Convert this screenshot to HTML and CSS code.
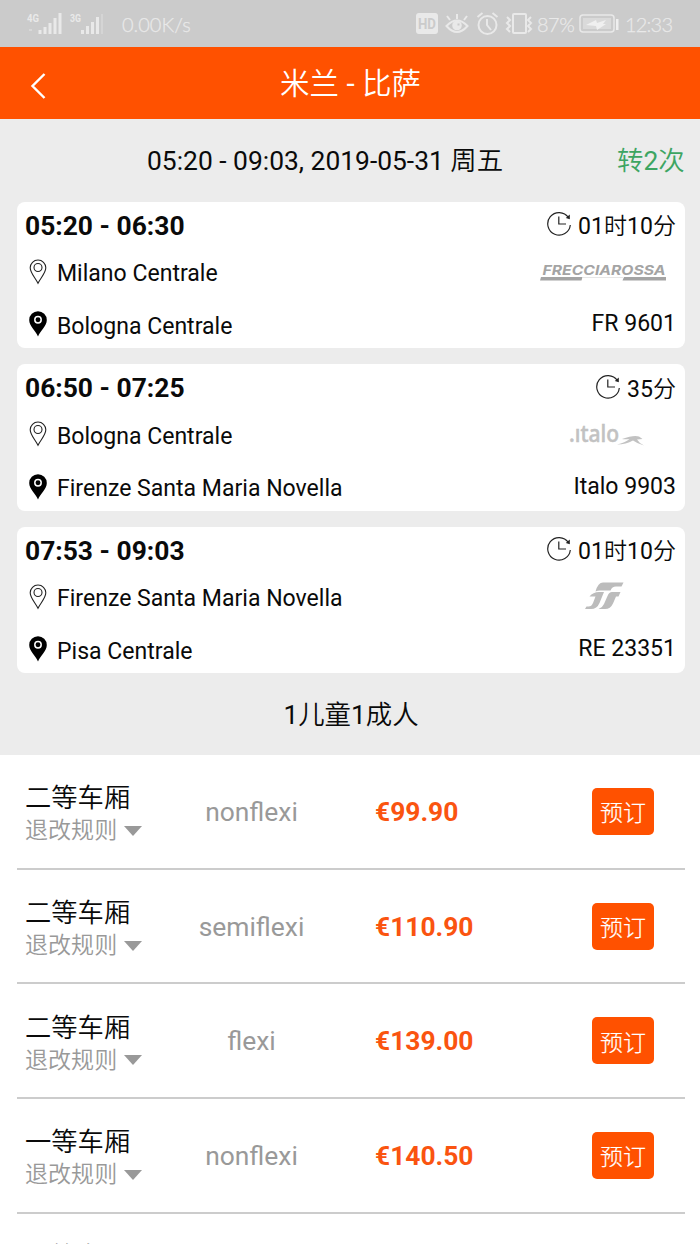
FILE: index.html
```html
<!DOCTYPE html>
<html lang="zh-CN">
<head>
<meta charset="utf-8">
<title>米兰 - 比萨</title>
<link rel="stylesheet" href="styles.css">
</head>
<body>
<svg class="defs" aria-hidden="true">
  <symbol id="pin-open" viewBox="0 0 18 26"><path d="M9 24.3C6.5 19 1.2 14 1.2 8.8a7.8 7.8 0 0 1 15.6 0C16.800 14 11.500 19 9 24.300Z" fill="none" stroke="#222" stroke-width="1.100"/><circle cx="9" cy="8.500" r="4" fill="none" stroke="#222" stroke-width="1.100"/></symbol>
  <symbol id="pin-full" viewBox="0 0 18 26"><path d="M9 25.500C6.500 19.500 .2 15 .2 9a8.800 8.800 0 0 1 17.600 0C17.800 15 11.500 19.500 9 25.500Z"/><circle cx="9" cy="8.700" r="3.200" fill="none" stroke="#fff" stroke-width="1.500"/></symbol>
  <symbol id="clock" viewBox="0 0 26 26"><path d="M22.400 6.500A11.300 11.300 0 1 0 24.300 14M12.800 5.500V13H20" fill="none" stroke="#222" stroke-width="1.200"/><path d="M23.800 3.500V8.200L19.800 7Z" fill="#222"/></symbol>
</svg>

<div class="status">
  <svg class="signal" width="80" height="24" viewBox="0 0 80 24" fill="#e9e9e9">
    <text class="net" x="0" y="10" textLength="12" lengthAdjust="spacingAndGlyphs">4G</text><text class="net" x="43" y="10" textLength="11" lengthAdjust="spacingAndGlyphs">3G</text>
    <path d="M2 17h3v2H2z" opacity=".45"/>
    <path d="M11.500 18h3v4h-3zM16.500 15h3v7h-3zM21.500 11h3v11h-3zM26.500 6h3v16h-3zM31.500 1h3v21h-3zM54 18h3v4h-3zM59 14h3v8h-3zM64 10h3v12h-3zM69 5h3v17h-3z"/>
    <path d="M74 2h2v20h-2z" opacity=".35"/>
  </svg>
  <span class="speed">0.00K/s</span>
  <svg class="indicators" width="121" height="24" viewBox="0 0 121 24" fill="none" stroke="#e9e9e9" stroke-width="2">
    <rect x="0" y="1" width="22" height="21" rx="3" fill="#e9e9e9" stroke="none"/>
    <text class="hd" x="2" y="17" textLength="18" lengthAdjust="spacingAndGlyphs">HD</text>
    <path d="M30.500 14Q41 3 51.500 14Q41 26 30.500 14ZM31 4l3 4M41 2v5M51 4l-3 4"/><circle cx="41" cy="13.500" r="3.800" fill="#e9e9e9"/><path d="M41.500 12.500h2" stroke="#cbcbcb"/>
    <circle cx="71.500" cy="13" r="9"/><path d="M71 7v6l4 5M61.500 5l5-4M76.500 1l5 4"/>
    <rect x="97" y="2" width="13" height="19" rx="1"/>
    <path d="M91 5l3 3-3 3 3 3-3 3 3 3M115 5l-3 3 3 3-3 3 3 3-3 3"/>
  </svg>
  <span class="percent">87%</span>
  <svg class="battery" width="40" height="20" viewBox="0 0 40 20"><rect x="1" y="1" width="34" height="17" rx="3" fill="none" stroke="#e9e9e9" stroke-width="1.500"/><rect x="4" y="4" width="28" height="11" fill="#dadada"/><path d="M7 11L17 6l1 3 9-3-3 4h3l-9 6-1-4Z" fill="#f0f0f0"/><path d="M37 5h2.500v11H37z" fill="#efefef"/></svg>
  <span class="time">12:33</span>
</div>

<header class="nav">
  <svg class="back" width="16" height="28" viewBox="0 0 16 28"><path d="M14.500 2L2.500 14l12 12" fill="none" stroke="#fff" stroke-width="2.400"/></svg>
  <h1 class="title">米兰 - 比萨</h1>
</header>

<main>
<section class="trip">
  <div class="summary"><span class="when">05:20 - 09:03, 2019-05-31 周五</span><span class="changes">转2次</span></div>

  <article class="leg">
    <div class="stops">
      <div class="hours">05:20 - 06:30</div>
      <div class="stop from"><svg class="pin"><use href="#pin-open"/></svg>Milano Centrale</div>
      <div class="stop to"><svg class="pin"><use href="#pin-full"/></svg>Bologna Centrale</div>
    </div>
    <div class="service">
      <div class="duration"><svg class="clock"><use href="#clock"/></svg>01时10分</div>
      <div class="brand"><svg class="freccia" width="128" height="20" viewBox="0 0 128 20" fill="#a4a4a4"><text class="freccia-name" x="2.500" y="11.500" textLength="123" lengthAdjust="spacingAndGlyphs">FRECCIAROSSA</text><path d="M1 14h41.500l-1 3.500H0zM84 14h42v3.500H82.500z"/><path d="M43 14.300h40v.6H43z" opacity=".35"/></svg></div>
      <div class="train">FR 9601</div>
    </div>
  </article>

  <article class="leg">
    <div class="stops">
      <div class="hours">06:50 - 07:25</div>
      <div class="stop from"><svg class="pin"><use href="#pin-open"/></svg>Bologna Centrale</div>
      <div class="stop to"><svg class="pin"><use href="#pin-full"/></svg>Firenze Santa Maria Novella</div>
    </div>
    <div class="service">
      <div class="duration"><svg class="clock"><use href="#clock"/></svg>35分</div>
      <div class="brand"><svg class="italo" width="76" height="24" viewBox="0 0 76 24" fill="#c2c2c2"><text class="italo-name" x="0" y="18" textLength="50" lengthAdjust="spacingAndGlyphs">.ıtalo</text><path d="M48 20.500Q56 18.500 60.500 15Q56 15.500 53 15Q65 10.500 70 12.500L73.500 15L68 15.500Q70 19 75 21.500Q68 19.500 64 16.500Q57 20.500 48 20.500Z"/></svg></div>
      <div class="train">Italo 9903</div>
    </div>
  </article>

  <article class="leg">
    <div class="stops">
      <div class="hours">07:53 - 09:03</div>
      <div class="stop from"><svg class="pin"><use href="#pin-open"/></svg>Firenze Santa Maria Novella</div>
      <div class="stop to"><svg class="pin"><use href="#pin-full"/></svg>Pisa Centrale</div>
    </div>
    <div class="service">
      <div class="duration"><svg class="clock"><use href="#clock"/></svg>01时10分</div>
      <div class="brand"><svg class="fs" width="39" height="28" viewBox="0 0 39 28" fill="#bcbcbc"><path d="M10.500 9.500Q13 .5 18 .5H38.500L36.500 4.500H31Q27 4.500 25.500 8.500H15Q12.500 8.500 10.500 9.500ZM4.500 14.500Q8 10 14 10H19L14.500 21Q12 27 6 27H0L1.500 24.500H3.500Q6.500 24.500 8 21L10.500 14.500ZM22.500 14Q24 10 27 10H35.500L33.500 14.500H31L28 21.500Q25.500 27 20 27H13.500Q17.500 25.500 19 22Z"/></svg></div>
      <div class="train">RE 23351</div>
    </div>
  </article>

  <div class="passengers">1儿童1成人</div>
</section>

<section class="fares">
  <div class="fare"><div class="cabin"><div class="class">二等车厢</div><div class="rules">退改规则<i class="caret"></i></div></div><div class="flex">nonflexi</div><div class="price">€99.90</div><button class="book">预订</button></div>
  <div class="fare"><div class="cabin"><div class="class">二等车厢</div><div class="rules">退改规则<i class="caret"></i></div></div><div class="flex">semiflexi</div><div class="price">€110.90</div><button class="book">预订</button></div>
  <div class="fare"><div class="cabin"><div class="class">二等车厢</div><div class="rules">退改规则<i class="caret"></i></div></div><div class="flex">flexi</div><div class="price">€139.00</div><button class="book">预订</button></div>
  <div class="fare"><div class="cabin"><div class="class">一等车厢</div><div class="rules">退改规则<i class="caret"></i></div></div><div class="flex">nonflexi</div><div class="price">€140.50</div><button class="book">预订</button></div>
  <div class="fare next"><div class="cabin"><div class="class">一等车厢</div></div></div>
</section>
</main>
</body>
</html>
```
FILE: styles.css
```css
* { box-sizing: border-box; }
html { overflow: hidden; }
body {
  margin: 0;
  width: 700px;
  height: 1244px;
  overflow: hidden;
  background: #fff;
  color: #0a0a0a;
  font-family: Roboto, "Noto Sans CJK SC DemiLight", "Noto Sans CJK SC", sans-serif;
  font-size: 23.050px;
}
svg { flex: none; overflow: visible; }
.defs { position: absolute; width: 0; height: 0; }

.status {
  display: flex;
  align-items: center;
  height: 47px;
  padding-left: 27px;
  background: #cbcbcb;
  color: #e9e9e9;
  font-family: Lato, sans-serif;
  font-size: 20px;
  font-weight: 300;
  -webkit-text-stroke: .25px #e9e9e9;
  white-space: nowrap;
}
.net { font: bold 11px Roboto, sans-serif; }
.hd { font: bold 15px Roboto, sans-serif; fill: #cbcbcb; stroke: none; -webkit-text-stroke: 0; }
.speed { width: 293px; padding-left: 15px; flex: none; }
.indicators { margin-left: 16px; }
.percent { width: 42px; flex: none; letter-spacing: -.5px; }
.battery { margin-left: 0; }
.time { margin-left: 6px; letter-spacing: -.8px; }

.nav {
  display: flex;
  align-items: center;
  height: 72px;
  padding-left: 30px;
  background: #ff5100;
  color: #fff;
}
.back { margin-top: 5px; }
.title { flex: 1; margin: 0 46px 0 0; padding: 2px 0 0 1px; text-align: center; font-size: 29.500px; font-weight: 400; line-height: 72px; }

.trip { height: 636px; padding: 0 15px 0 17px; background: #ececec; }
.summary { display: flex; height: 82.500px; line-height: 84px; font-size: 26.400px; white-space: nowrap; }
.when { width: 600px; padding-left: 130px; }
.changes { color: #3da562; }

.leg {
  display: flex;
  justify-content: space-between;
  height: 146.500px;
  margin-bottom: 16.200px;
  padding: 0 9px 0 8px;
  border-radius: 8px;
  background: #fff;
  white-space: nowrap;
}
.hours { height: 48px; line-height: 48px; font-size: 26.400px; font-weight: 700; }
.stop { display: flex; align-items: center; height: 48px; }
.to { height: 57px; }
.pin { width: 18px; height: 26px; margin: -4px 10px 0 4px; }
.service { display: flex; flex-direction: column; align-items: flex-end; }
.duration { display: flex; align-items: center; height: 47px; }
.clock { width: 26px; height: 26px; margin: 0 6px 0 0; }
.brand { display: flex; justify-content: center; align-items: center; height: 50px; }
.freccia { margin: 6px 8px 0 0; }
.italo { margin: 7px 31px 0 0; }
.fs { margin: 1px 52px 0 0; }
.freccia-name { font: italic bold 13.500px Inter, sans-serif; }
.italo-name { font: 500 23px "Noto Sans", sans-serif; stroke: #c2c2c2; stroke-width: .5; }
.train { height: 54px; line-height: 60px; }

.passengers { height: 65px; line-height: 51px; text-align: center; font-size: 26.400px; }

.fares { height: 489px; overflow: hidden; padding: 0 15px 0 17px; }
.fare { display: flex; align-items: center; height: 114.700px; border-bottom: 2px solid #ccc; padding-left: 8px; }
.cabin { width: 142px; padding-top: 4px; }
.class { font-size: 26.300px; line-height: 36px; }
.rules { display: flex; align-items: center; color: #999; line-height: 30px; font-weight: 300; }
.caret { margin: -1px 0 0 7px; border: 9px solid transparent; border-top: 10px solid #999; border-bottom: 0; }
.flex { width: 169px; text-align: center; color: #999; font-size: 26.400px; padding-top: 1px; }
.price { width: 231px; padding: 1px 0 0 39px; color: #fa5410; font-size: 26.400px; font-weight: 700; }
.book { width: 62px; height: 47px; margin-left: 25px; padding: 0; border: 0; border-radius: 5px; background: #ff5100; color: #fff; font: 300 23px Roboto, "Noto Sans CJK SC", sans-serif; -webkit-text-stroke: .2px #fff; }
.next { align-items: flex-start; }
.next .cabin { padding-top: 25px; }
```
